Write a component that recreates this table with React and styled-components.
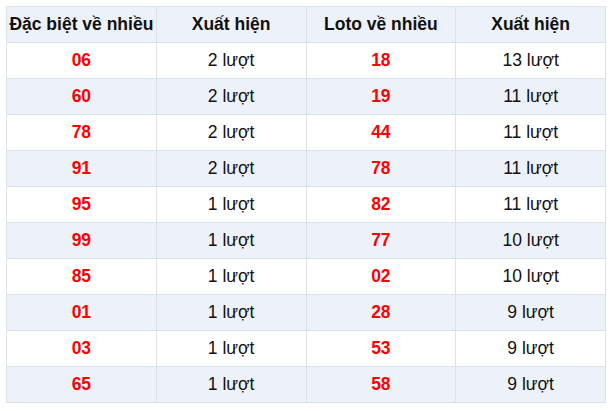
import React from 'react'
import styled, { createGlobalStyle } from 'styled-components'

const GlobalStyle = createGlobalStyle`
  body {
    margin: 0;
    padding: 6px;
    background: #fff;
    font-family: "Liberation Sans", Arial, sans-serif;
  }
`

const Table = styled.table`
  width: 600px;
  border-collapse: collapse;
  table-layout: fixed;
  font-size: 17.5px;
  color: #111;
`

const HeadCell = styled.th`
  height: 35px;
  padding: 0;
  border: 1px solid #dde1e8;
  background: #edf2fa;
  font-weight: bold;
  text-align: center;
  white-space: nowrap;
`

const Row = styled.tr`
  background: ${p => (p.$alt ? '#edf2fa' : '#fff')};
`

const Cell = styled.td`
  height: 35px;
  padding: 0;
  border: 1px solid #dde1e8;
  text-align: center;
  color: ${p => (p.$num ? '#ff0000' : '#111')};
  font-weight: ${p => (p.$num ? 'bold' : 'normal')};
`

const special = [
  ['06', 2], ['60', 2], ['78', 2], ['91', 2], ['95', 1],
  ['99', 1], ['85', 1], ['01', 1], ['03', 1], ['65', 1],
]

const loto = [
  ['18', 13], ['19', 11], ['44', 11], ['78', 11], ['82', 11],
  ['77', 10], ['02', 10], ['28', 9], ['53', 9], ['58', 9],
]

export default function App() {
  return (
    <>
      <GlobalStyle />
      <Table>
        <thead>
          <tr>
            <HeadCell>Đặc biệt về nhiều</HeadCell>
            <HeadCell>Xuất hiện</HeadCell>
            <HeadCell>Loto về nhiều</HeadCell>
            <HeadCell>Xuất hiện</HeadCell>
          </tr>
        </thead>
        <tbody>
          {special.map((s, i) => (
            <Row key={i} $alt={i % 2 === 1}>
              <Cell $num>{s[0]}</Cell>
              <Cell>{s[1]} lượt</Cell>
              <Cell $num>{loto[i][0]}</Cell>
              <Cell>{loto[i][1]} lượt</Cell>
            </Row>
          ))}
        </tbody>
      </Table>
    </>
  )
}
